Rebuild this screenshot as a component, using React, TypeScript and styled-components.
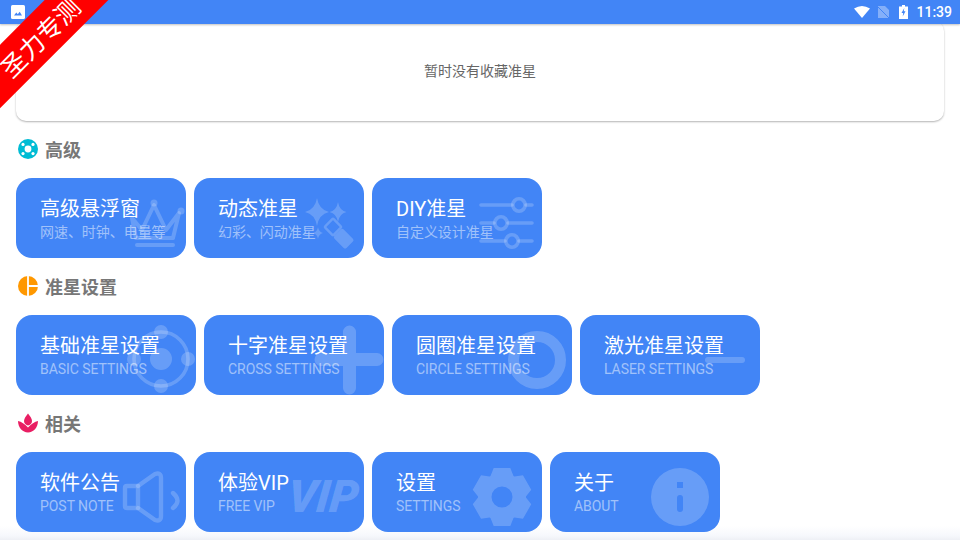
import React from "react";
import styled, { createGlobalStyle } from "styled-components";

const BLUE = "#4285f6";
const WASH = "rgba(255,255,255,0.2)";

const Global = createGlobalStyle`
  html, body { margin: 0; padding: 0; background: #fff; }
  body { font-family: Roboto, "Noto Sans CJK SC", sans-serif; }
`;

const Page = styled.div`
  position: relative;
  width: 960px;
  height: 540px;
  overflow: hidden;
  background: #fff;
`;

const StatusBar = styled.header`
  position: relative;
  z-index: 2;
  height: 24px;
  display: flex;
  align-items: center;
  padding: 0 8px 0 11px;
  background: ${BLUE};
  box-shadow: 0 1px 2px rgba(0, 0, 0, 0.25);
`;

const StatusRight = styled.div`
  margin-left: auto;
  display: flex;
  align-items: center;
`;

const StatusIcon = styled.svg<{ $gap: number }>`
  display: block;
  margin-right: ${(p) => p.$gap}px;
`;

const Clock = styled.span`
  color: #fff;
  font: 500 14px Roboto, sans-serif;
`;

const Favorites = styled.section`
  position: relative;
  z-index: 1;
  box-sizing: border-box;
  height: 100px;
  margin: -3px 16px 0;
  padding-bottom: 2px;
  border-radius: 10px;
  background: #fff;
  box-shadow: 0 1px 2px rgba(0, 0, 0, 0.3);
  display: flex;
  align-items: center;
  justify-content: center;
  color: #666;
  font: 14px "Noto Sans CJK SC", sans-serif;
`;

const Content = styled.main`
  position: relative;
  z-index: 1;
  padding: 18px 16px 0;
  display: flex;
  flex-direction: column;
  gap: 18px;
`;

const Section = styled.section`
  display: flex;
  flex-direction: column;
  gap: 19px;
`;

const SectionHead = styled.h2`
  margin: 0 0 0 2px;
  height: 20px;
  display: flex;
  align-items: center;
  gap: 7px;
  color: #777;
  font: 700 18px/20px "Noto Sans CJK SC", sans-serif;
`;

const Row = styled.div`
  display: flex;
  gap: 8px;
`;

const Tile = styled.div<{ $w: number }>`
  position: relative;
  overflow: hidden;
  box-sizing: border-box;
  width: ${(p) => p.$w}px;
  height: 80px;
  padding: 19px 0 0 24px;
  border-radius: 16px;
  background: ${BLUE};
`;

const TileTitle = styled.div`
  position: relative;
  color: #fff;
  font: 20px/24px Roboto, "Noto Sans CJK SC", sans-serif;
  white-space: nowrap;
`;

const TileSub = styled.div`
  position: relative;
  margin-top: 1px;
  color: rgba(255, 255, 255, 0.5);
  font: 14px/20px Roboto, "Noto Sans CJK SC", sans-serif;
  letter-spacing: -0.05px;
  white-space: nowrap;
`;

const Deco = styled.svg`
  position: absolute;
  left: 0;
  top: 0;
`;

const VipMark = styled.span`
  position: absolute;
  right: 6px;
  top: 18px;
  color: ${WASH};
  font: italic 900 45px/54px Roboto, sans-serif;
  transform: skewX(-6deg);
`;

const Ribbon = styled.div`
  position: absolute;
  z-index: 3;
  left: -62px;
  top: 15.5px;
  box-sizing: border-box;
  width: 200px;
  height: 45px;
  padding-left: 5px;
  display: flex;
  align-items: center;
  justify-content: center;
  background: #ff0000;
  color: #fff;
  font: 25px/45px "Noto Sans CJK SC", sans-serif;
  transform: rotate(-45deg);
`;

const BottomFade = styled.div`
  position: absolute;
  z-index: 0;
  left: 0;
  right: 0;
  bottom: 0;
  height: 14px;
  pointer-events: none;
  background: linear-gradient(rgba(240, 243, 250, 0), rgba(240, 243, 250, 0.6) 70%, #eef0f5);
`;

const gearPath = (cx: number, cy: number) => {
  const pts: string[] = [];
  for (let i = 0; i < 6; i++) {
    const a = (i * Math.PI) / 3;
    const p = (r: number, w: number) => {
      const x = cx + w * Math.cos(a) + r * Math.sin(a);
      const y = cy + w * Math.sin(a) - r * Math.cos(a);
      return `${x.toFixed(2)} ${y.toFixed(2)}`;
    };
    pts.push(p(21, -11.5), p(29, -8.3), p(29, 8.3), p(21, 11.5));
  }
  return `M${pts.join("L")}Z`;
};

const circleSub = (cx: number, cy: number, r: number) =>
  `M${cx - r} ${cy}a${r} ${r} 0 1 0 ${2 * r} 0a${r} ${r} 0 1 0 ${-2 * r} 0Z`;

const Star = ({ x, y, r, ry = r }: { x: number; y: number; r: number; ry?: number }) => (
  <path
    d={`M${x} ${y - ry}Q${x + r * 0.16} ${y - ry * 0.16} ${x + r} ${y}Q${x + r * 0.16} ${y + ry * 0.16} ${x} ${y + ry}Q${x - r * 0.16} ${y + ry * 0.16} ${x - r} ${y}Q${x - r * 0.16} ${y - ry * 0.16} ${x} ${y - ry}Z`}
    fill={WASH}
  />
);

const TileArt = ({ w, children }: { w: number; children: React.ReactNode }) => (
  <Deco width={w} height={80} viewBox={`0 0 ${w} 80`} aria-hidden="true">
    {children}
  </Deco>
);

const strokeProps = { fill: "none", stroke: WASH, strokeLinecap: "round" as const, strokeLinejoin: "round" as const };

const arts: Record<string, (w: number) => React.ReactNode> = {
  crown: (w) => (
    <TileArt w={w}>
      <path d="M116 40L126 52L138 27L150 52L163 35L157 60H120Z" {...strokeProps} strokeWidth={4} />
      <circle cx={138} cy={25} r={3.5} fill={WASH} />
      <circle cx={165} cy={33} r={3.5} fill={WASH} />
      <path d="M121 67H157" {...strokeProps} strokeWidth={4} />
    </TileArt>
  ),
  wand: (w) => (
    <TileArt w={w}>
      <Star x={123} y={34} r={12} ry={14} />
      <Star x={144} y={34} r={8.500} ry={10} />
      <Star x={124} y={55} r={5} ry={6} />
      <rect x={133} y={43} width={12} height={12} rx={1} transform="rotate(45 139 49)" {...strokeProps} strokeWidth={2.4} />
      <rect x={141.200} y={54.200} width={17} height={13} rx={2} transform="rotate(45 149.700 60.700)" fill={WASH} />
    </TileArt>
  ),
  sliders: (w) => (
    <TileArt w={w}>
      <g {...strokeProps} strokeWidth={3.6}>
        <path d="M109 27H140M154 27H160" />
        <circle cx={147} cy={27} r={6.2} />
        <path d="M109 45H122M136 45H160" />
        <circle cx={129} cy={45} r={6.2} />
        <path d="M109 63H133M147 63H160" />
        <circle cx={140} cy={63} r={6.2} />
      </g>
    </TileArt>
  ),
  target: (w) => (
    <TileArt w={w}>
      <circle cx={145} cy={44} r={27} {...strokeProps} strokeWidth={3.6} />
      <circle cx={145} cy={44} r={11} fill={WASH} />
      <circle cx={145} cy={17} r={7} fill={WASH} />
      <circle cx={145} cy={71} r={7} fill={WASH} />
      <circle cx={118} cy={44} r={7} fill={WASH} />
      <circle cx={172} cy={44} r={7} fill={WASH} />
    </TileArt>
  ),
  cross: (w) => (
    <TileArt w={w}>
      <path
        d="M139 17a6.500 6.500 0 0 1 13 0V38H173a6.500 6.500 0 0 1 0 13H152V73a6.500 6.500 0 0 1-13 0V51H117a6.500 6.500 0 0 1 0-13H139Z"
        fill={WASH}
      />
    </TileArt>
  ),
  ring: (w) => (
    <TileArt w={w}>
      <circle cx={145} cy={45} r={23.5} {...strokeProps} strokeWidth={11} />
    </TileArt>
  ),
  laser: (w) => (
    <TileArt w={w}>
      <rect x={125} y={42} width={40} height={6} rx={3} fill={WASH} />
    </TileArt>
  ),
  speaker: (w) => (
    <TileArt w={w}>
      <g {...strokeProps} strokeWidth={4.4}>
        <path d="M111 34H122V56H111Q109 56 109 54V36Q109 34 111 34Z" />
        <path d="M122 34L139 22Q145 20 145 26V64Q145 70 139 68L122 56" />
        <path d="M157 41Q166 49 157 56" />
      </g>
    </TileArt>
  ),
  gear: (w) => (
    <TileArt w={w}>
      <path d={gearPath(130, 45) + circleSub(130, 45, 10.5)} fill={WASH} fillRule="evenodd" />
    </TileArt>
  ),
  info: (w) => (
    <TileArt w={w}>
      <path
        d={circleSub(130, 45, 29) + "M127 30h6v6h-6ZM130 43a3 3 0 0 1 3 3v11a3 3 0 0 1-6 0V46a3 3 0 0 1 3-3Z"}
        fill={WASH}
        fillRule="evenodd"
      />
    </TileArt>
  ),
  vip: () => <VipMark>VIP</VipMark>,
};

type Item = { title: string; sub: string; art: string };
type Group = { head: string; icon: React.ReactNode; width: number; items: Item[] };

const TealIcon = () => (
  <svg width={20} height={20} viewBox="0 0 20 20">
    <circle cx={10} cy={10} r={10} fill="#00bcd4" />
    <circle cx={10} cy={10} r={3.4} fill="#fff" />
    <g fill="#fff">
      <circle cx={5} cy={5.4} r={1.6} />
      <circle cx={15} cy={5.4} r={1.6} />
      <circle cx={5} cy={14.6} r={1.6} />
      <circle cx={15} cy={14.6} r={1.6} />
    </g>
  </svg>
);

const OrangeIcon = () => (
  <svg width={20} height={20} viewBox="0 0 20 20">
    <circle cx={10} cy={10} r={10} fill="#ff9800" />
    <path d="M10 0V20M10 10H20" stroke="#fff" strokeWidth={1.8} fill="none" />
  </svg>
);

const LotusIcon = () => (
  <svg width={20} height={20} viewBox="0 0 20 20">
    <path d="M10 0.500C12 3 14 5.500 14 8C14 10.500 12 12 10 12.500C8 12 6 10.500 6 8C6 5.500 8 3 10 0.500Z" fill="#e91e63" />
    <path d="M0 8C3.500 8.500 6.500 11 10 14.500C13.500 11 16.500 8.500 20 8C20 14.500 15.500 19.500 10 19.500C4.500 19.500 0 14.500 0 8Z" fill="#e91e63" />
  </svg>
);

const groups: Group[] = [
  {
    head: "高级",
    icon: <TealIcon />,
    width: 170,
    items: [
      { title: "高级悬浮窗", sub: "网速、时钟、电量等", art: "crown" },
      { title: "动态准星", sub: "幻彩、闪动准星", art: "wand" },
      { title: "DIY准星", sub: "自定义设计准星", art: "sliders" },
    ],
  },
  {
    head: "准星设置",
    icon: <OrangeIcon />,
    width: 180,
    items: [
      { title: "基础准星设置", sub: "BASIC SETTINGS", art: "target" },
      { title: "十字准星设置", sub: "CROSS SETTINGS", art: "cross" },
      { title: "圆圈准星设置", sub: "CIRCLE SETTINGS", art: "ring" },
      { title: "激光准星设置", sub: "LASER SETTINGS", art: "laser" },
    ],
  },
  {
    head: "相关",
    icon: <LotusIcon />,
    width: 170,
    items: [
      { title: "软件公告", sub: "POST NOTE", art: "speaker" },
      { title: "体验VIP", sub: "FREE VIP", art: "vip" },
      { title: "设置", sub: "SETTINGS", art: "gear" },
      { title: "关于", sub: "ABOUT", art: "info" },
    ],
  },
];

export default function App() {
  return (
    <Page>
      <Global />
      <StatusBar>
        <svg width={14} height={14} viewBox="0 0 14 14">
          <rect width={14} height={14} rx={1.5} fill="#fff" />
          <path d="M3 10.500L5.300 7.500L6.800 9.300L8.700 6.800L11 10.500Z" fill={BLUE} />
        </svg>
        <StatusRight>
          <StatusIcon $gap={8} width={16} height={12} viewBox="0 0 16 12">
            <path d="M0 2.500Q8 -2.500 16 2.500L8 12Z" fill="#fff" />
          </StatusIcon>
          <StatusIcon $gap={10} width={11} height={12} viewBox="0 0 11 12">
            <path d="M0 0H7L11 4V12H0Z" fill="rgba(255,255,255,0.35)" />
            <path d="M0 1L11 12" stroke={BLUE} strokeWidth={1} />
          </StatusIcon>
          <StatusIcon $gap={8} width={9} height={14} viewBox="0 0 9 14">
            <path d="M3 0H6V1.500H9V14H0V1.500H3Z" fill="#fff" />
            <path d="M5.300 3L2.500 8H4.200L3.700 11.500L6.500 6.300H4.800Z" fill={BLUE} />
          </StatusIcon>
          <Clock>11:39</Clock>
        </StatusRight>
      </StatusBar>
      <Favorites>暂时没有收藏准星</Favorites>
      <Content>
        {groups.map((g) => (
          <Section key={g.head}>
            <SectionHead>
              {g.icon}
              {g.head}
            </SectionHead>
            <Row>
              {g.items.map((it) => (
                <Tile key={it.title} $w={g.width}>
                  {arts[it.art](g.width)}
                  <TileTitle>{it.title}</TileTitle>
                  <TileSub>{it.sub}</TileSub>
                </Tile>
              ))}
            </Row>
          </Section>
        ))}
      </Content>
      <Ribbon>圣力专测</Ribbon>
      <BottomFade />
    </Page>
  );
}
